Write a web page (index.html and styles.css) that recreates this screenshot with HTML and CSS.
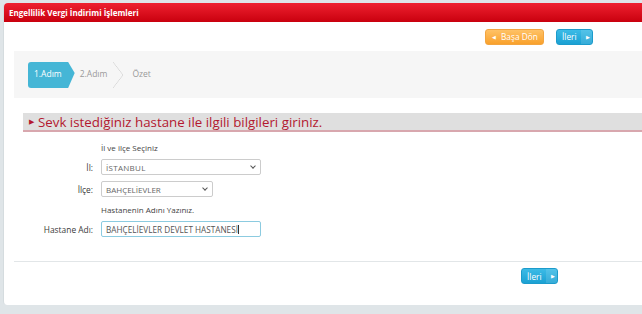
FILE: index.html
```html
<!DOCTYPE html>
<html lang="tr">
<head>
    <meta charset="UTF-8">
    <meta name="viewport" content="width=device-width, initial-scale=1.0">
    <title>Engellilik Vergi İndirimi İşlemleri</title>
    <link rel="stylesheet" href="styles.css">
</head>
<body>
    <div class="panel">
        <div class="panel-header">Engellilik Vergi İndirimi İşlemleri</div>
        <div class="toolbar">
            <button type="button" class="btn btn-orange"><span class="btn-arrow">&#9664;</span><span class="btn-text">Başa Dön</span></button>
            <button type="button" class="btn btn-blue"><span class="btn-text">İleri</span><span class="btn-arrow">&#9654;</span></button>
        </div>
        <div class="steps">
            <div class="step active">1.Adım</div>
            <div class="step">2.Adım</div>
            <div class="step-sep"></div>
            <div class="step">Özet</div>
        </div>
        <h2 class="section-title"><span class="title-arrow">&#9654;</span>Sevk istediğiniz hastane ile ilgili bilgileri giriniz.</h2>
        <form class="form">
            <div class="form-note">İl ve ilçe Seçiniz</div>
            <label class="form-label">İl:</label>
            <div class="select select-wide">İSTANBUL<span class="chev"></span></div>
            <label class="form-label">İlçe:</label>
            <div class="select select-narrow">BAHÇELİEVLER<span class="chev"></span></div>
            <div class="form-note note-gap">Hastanenin Adını Yazınız.</div>
            <label class="form-label">Hastane Adı:</label>
            <div class="text-input">BAHÇELİEVLER DEVLET HASTANESİ<span class="caret"></span></div>
        </form>
        <div class="footer">
            <button type="button" class="btn btn-blue"><span class="btn-text">İleri</span><span class="btn-arrow">&#9654;</span></button>
        </div>
    </div>
</body>
</html>
```

FILE: styles.css
```css
body {
    margin: 0;
    padding: 3px 0 0 3px;
    background-color: #dfe5e8;
    font-family: "Open Sans", Arial, sans-serif;
    height: 314px;
    box-sizing: border-box;
    overflow: hidden;
}
.panel {
    background: white;
    border-radius: 4px 0 0 4px;
    height: 302px;
    border-left: 1px solid #d5dcdf;
    box-sizing: border-box;
}
.panel-header {
    height: 19px;
    line-height: 19px;
    background: linear-gradient(#ee2130, #c9000e);
    color: white;
    font-size: 8px;
    font-weight: bold;
    padding-left: 5px;
    border-radius: 4px 0 0 0;
}
.toolbar {
    height: 29px;
    display: flex;
    justify-content: flex-end;
    align-items: center;
    gap: 12px;
    padding-right: 49px;
}
.btn {
    display: flex;
    align-items: stretch;
    height: 16px;
    padding: 0;
    border: 1px solid transparent;
    border-radius: 3px;
    color: white;
    font-family: "Open Sans", Arial, sans-serif;
    font-size: 8.3px;
    white-space: nowrap;
    cursor: pointer;
    overflow: hidden;
}
.btn-text {
    display: flex;
    align-items: center;
    padding: 0 6px;
}
.btn-arrow {
    display: flex;
    align-items: center;
    padding: 0 6px;
    font-size: 5px;
}
.btn-orange {
    background: linear-gradient(#ffc266, #f9a12c);
    border-color: #f3a540;
    width: 59px;
}
.btn-orange .btn-arrow {
    padding: 0 5px 0 6px;
}
.btn-orange .btn-text {
    padding: 0;
}
.btn-blue {
    background: linear-gradient(#3cbbe6, #1ba1d3);
    border-color: #1c9bcb;
    width: 37px;
}
.btn-blue .btn-arrow {
    background: rgba(255, 255, 255, 0.12);
    padding: 0 5px;
}
.btn-blue .btn-text {
    padding: 0 4px 0 5px;
}
.steps {
    margin-left: 10px;
    height: 47px;
    background: #f6f6f6;
    display: flex;
    align-items: flex-start;
    padding: 11px 0 0 14px;
    box-sizing: border-box;
}
.step {
    height: 26px;
    line-height: 24px;
    font-size: 8.5px;
    color: #9a9a9a;
    padding: 0 11px 0 5px;
}
.step.active {
    background: #45b6d6;
    color: white;
    padding: 0 13px 0 6px;
    margin-right: 0;
    border-radius: 3px 0 0 3px;
    clip-path: polygon(0 0, 86% 0, 100% 42%, 86% 100%, 0 100%);
}
.step-sep {
    width: 10px;
    height: 26px;
    margin-left: -5px;
    margin-right: 4px;
    background: linear-gradient(to bottom right, transparent 46%, #d8d8d8 50%, transparent 54%) bottom / 100% 50% no-repeat,
        linear-gradient(to top right, transparent 46%, #d8d8d8 50%, transparent 54%) top / 100% 50% no-repeat;
}
.section-title {
    margin: 15px 0 0 19px;
    height: 17px;
    line-height: 17px;
    background: #dfdfdf;
    border-bottom: 2px solid #d8a7ae;
    color: #b3182f;
    font-size: 13.3px;
    font-weight: normal;
    padding-left: 6px;
    white-space: nowrap;
    overflow: hidden;
}
.title-arrow {
    font-size: 7px;
    vertical-align: 3px;
    margin-right: 4px;
}
.form {
    display: grid;
    grid-template-columns: 89px auto;
    column-gap: 8px;
    row-gap: 6px;
    align-items: center;
    justify-items: start;
    margin-top: 11px;
    font-size: 8px;
    color: #444;
}
.form-note {
    grid-column: 2;
    height: 10px;
    line-height: 10px;
}
.note-gap {
    margin-top: 2px;
}
.form-label {
    justify-self: end;
    font-size: 8.4px;
    color: #3a3a3a;
}
.select, .text-input {
    height: 16px;
    line-height: 16px;
    border: 1px solid #ccc;
    border-radius: 2px;
    padding-left: 4px;
    box-sizing: border-box;
    position: relative;
    text-transform: uppercase;
    font-size: 8px;
    color: #666;
}
.select-wide {
    width: 160px;
    letter-spacing: 0.3px;
}
.select-narrow {
    width: 112px;
}
.chev {
    position: absolute;
    right: 5px;
    top: 4px;
    width: 3px;
    height: 3px;
    border-right: 1.5px solid #555;
    border-bottom: 1.5px solid #555;
    transform: rotate(45deg);
}
.text-input {
    width: 160px;
    border-color: #8ccbe0;
    color: #555;
    font-size: 8.2px;
}
.caret {
    display: inline-block;
    width: 1px;
    height: 9px;
    background: #333;
    vertical-align: -1px;
}
.footer {
    margin: 24px 0 0 10px;
    border-top: 1px solid #e2e6e8;
    display: flex;
    justify-content: flex-end;
    padding: 6px 84px 0 0;
}
```
